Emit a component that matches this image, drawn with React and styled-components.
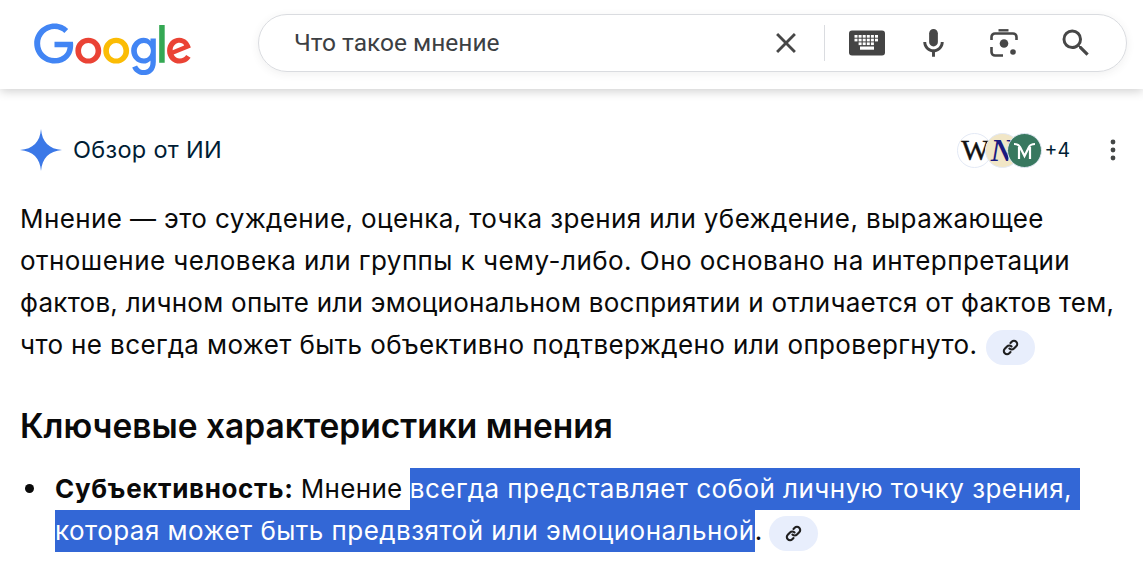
import React from 'react';
import styled, { createGlobalStyle } from 'styled-components';

const GlobalStyle = createGlobalStyle`
  html, body {
    margin: 0;
    padding: 0;
    background: #fff;
    overflow: hidden;
  }
  body {
    font-family: "Inter", "Liberation Sans", sans-serif;
    color: #0a0a0a;
  }
`;

const Page = styled.div`
  width: 1143px;
  height: 570px;
  overflow: hidden;
`;

const Header = styled.header`
  display: flex;
  align-items: flex-start;
  height: 89px;
  box-sizing: border-box;
  padding: 14px 16px 0 34px;
  box-shadow: 0 2px 10px rgba(0, 0, 0, 0.2);
`;

const LogoBox = styled.svg`
  width: 158px;
  height: 54px;
  margin-top: 9px;
  margin-right: 66px;
  flex: none;
`;

const SearchBar = styled.div`
  flex: 1;
  height: 58px;
  display: flex;
  align-items: center;
  box-sizing: border-box;
  padding-left: 35px;
  border: 1px solid #dadce0;
  border-radius: 29px;
  box-shadow: 0 2px 8px rgba(60, 64, 67, 0.08);
`;

const Query = styled.div`
  flex: 1;
  font-family: "Roboto", "Liberation Sans", sans-serif;
  font-size: 24.5px;
  color: #3c4043;
  margin-top: -1px;
`;

const IconSlot = styled.div`
  width: ${({ $w }) => $w}px;
  height: 36px;
  display: flex;
  align-items: center;
  justify-content: center;
  flex: none;
  color: #474747;
`;

const Divider = styled.div`
  width: 1px;
  height: 36px;
  background: #dadce0;
  flex: none;
`;

const Main = styled.main`
  padding: 0 20px;
`;

const OverviewRow = styled.div`
  display: flex;
  align-items: center;
  height: 42px;
  margin-top: 40px;
`;

const Spark = styled.svg`
  width: 42px;
  height: 42px;
  flex: none;
  margin-right: 11px;
`;

const OverviewTitle = styled.div`
  flex: 1;
  font-size: 23.5px;
  letter-spacing: 0.3px;
  color: #001d35;
  margin-top: -2px;
`;

const Sources = styled.div`
  display: flex;
  align-items: center;
`;

const Favicon = styled.svg`
  width: 35px;
  height: 35px;
  margin-left: ${({ $overlap }) => -$overlap}px;
  flex: none;
`;

const MoreCount = styled.span`
  font-size: 19.5px;
  color: #001d35;
  margin-left: 3px;
  margin-right: 31px;
`;

const MoreButton = styled.svg`
  width: 24px;
  height: 24px;
  color: #444746;
  margin-right: -2px;
`;

const Paragraph = styled.p`
  margin: 27px 0 0;
  font-size: 26px;
  line-height: 42px;
  white-space: nowrap;
`;

const Line = styled.span`
  display: block;
  letter-spacing: ${({ $ls }) => $ls}px;
`;

const Heading = styled.h2`
  margin: 38px 0 0;
  font-size: 33.5px;
  line-height: 44px;
  font-weight: 600;
`;

const ListRow = styled.div`
  display: grid;
  grid-template-columns: 35px 1fr;
  margin-top: 20px;
  font-size: 26px;
  line-height: 42px;
  white-space: nowrap;
`;

const Bullet = styled.span`
  width: 9px;
  height: 9px;
  margin: 16px 0 0 5px;
  border-radius: 50%;
  background: #0a0a0a;
`;

const Strong = styled.strong`
  font-weight: 700;
  letter-spacing: 0.65px;
`;

const Plain = styled.span`
  letter-spacing: 0.3px;
`;

const Selected = styled.span`
  background: #3367d6;
  color: #fff;
  padding: 5px 0 6px;
  letter-spacing: 0.46px;
`;

const LinkChip = styled.span`
  display: inline-flex;
  align-items: center;
  justify-content: center;
  width: 49px;
  height: 35px;
  margin-left: ${({ $gap }) => $gap}px;
  border-radius: 18px;
  background: #e8eefc;
  vertical-align: -2px;
`;

const LinkGlyph = styled.svg`
  width: 17px;
  height: 17px;
  color: #1f1f1f;
`;

const GoogleLogo = () => (
  <LogoBox viewBox="0 0 272 92">
    <path fill="#EA4335" d="M115.75 47.18c0 12.77-9.99 22.18-22.25 22.18s-22.25-9.41-22.25-22.18C71.25 34.32 81.24 25 93.5 25s22.25 9.32 22.25 22.18zm-9.74 0c0-7.98-5.79-13.44-12.51-13.44S80.99 39.2 80.99 47.18c0 7.9 5.79 13.44 12.51 13.44s12.51-5.55 12.51-13.44z" />
    <path fill="#FBBC05" d="M163.75 47.18c0 12.77-9.99 22.18-22.25 22.18s-22.25-9.41-22.25-22.18c0-12.85 9.99-22.18 22.25-22.18s22.25 9.32 22.25 22.18zm-9.74 0c0-7.98-5.79-13.44-12.51-13.44s-12.51 5.46-12.51 13.44c0 7.9 5.79 13.44 12.51 13.44s12.51-5.55 12.51-13.44z" />
    <path fill="#4285F4" d="M209.75 26.34v39.82c0 16.38-9.66 23.07-21.08 23.07-10.75 0-17.22-7.19-19.66-13.07l8.48-3.53c1.51 3.61 5.21 7.87 11.17 7.87 7.31 0 11.84-4.51 11.84-13v-3.19h-.34c-2.18 2.69-6.38 5.04-11.68 5.04-11.09 0-21.25-9.66-21.25-22.09 0-12.52 10.16-22.26 21.25-22.26 5.29 0 9.49 2.35 11.68 4.96h.34v-3.61h9.25zm-8.56 20.92c0-7.81-5.21-13.52-11.84-13.52-6.72 0-12.35 5.71-12.35 13.52 0 7.73 5.63 13.36 12.35 13.36 6.63 0 11.84-5.63 11.84-13.36z" />
    <path fill="#34A853" d="M225 3v65h-9.5V3h9.5z" />
    <path fill="#EA4335" d="M262.02 54.48l7.56 5.04c-2.44 3.61-8.32 9.83-18.48 9.83-12.6 0-22.01-9.74-22.01-22.18 0-13.19 9.49-22.18 20.92-22.18 11.51 0 17.14 9.16 18.98 14.11l1.01 2.52-29.65 12.28c2.27 4.45 5.8 6.72 10.75 6.72 4.96 0 8.4-2.44 10.92-6.14zm-23.27-7.98l19.82-8.23c-1.09-2.77-4.37-4.7-8.23-4.7-4.95 0-11.84 4.37-11.59 12.93z" />
    <path fill="#4285F4" d="M35.29 41.41V32H67c.31 1.64.47 3.58.47 5.68 0 7.06-1.93 15.79-8.15 22.01-6.05 6.3-13.78 9.66-24.02 9.66C16.32 69.35.36 53.89.36 34.91.36 15.93 16.32.47 35.3.47c10.5 0 17.98 4.12 23.6 9.49l-6.64 6.64c-4.03-3.78-9.49-6.72-16.97-6.72-13.86 0-24.7 11.17-24.7 25.03 0 13.86 10.84 25.03 24.7 25.03 8.99 0 14.11-3.61 17.39-6.89 2.66-2.66 4.41-6.46 5.1-11.65l-22.49.01z" />
  </LogoBox>
);

const CloseIcon = () => (
  <svg width="34" height="34" viewBox="0 0 24 24" fill="currentColor">
    <path d="M19 6.41 17.59 5 12 10.59 6.41 5 5 6.41 10.59 12 5 17.59 6.41 19 12 13.41 17.59 19 19 17.59 13.41 12z" />
  </svg>
);

const KeyboardIcon = () => (
  <svg width="36" height="26" viewBox="0 0 36 26">
    <rect x="0" y="0.5" width="36" height="25" rx="3" fill="#444" />
    {[0, 1, 2].map((row) =>
      [0, 1, 2, 3, 4, 5].slice(row === 2 ? 1 : 0, row === 2 ? 5 : 6).map((col) => (
        <rect key={`${row}-${col}`} x={5.5 + col * 4.1} y={5 + row * 3.7} width="3" height="2.7" fill="#fff" />
      ))
    )}
    <rect x="11" y="16.5" width="14" height="3.2" fill="#fff" />
  </svg>
);

const MicIcon = () => (
  <svg width="35" height="35" viewBox="0 0 24 24" fill="currentColor">
    <path d="M12 14c1.66 0 3-1.34 3-3V5c0-1.66-1.34-3-3-3S9 3.34 9 5v6c0 1.66 1.34 3 3 3z" />
    <path d="M17 11c0 2.76-2.24 5-5 5s-5-2.24-5-5H5c0 3.53 2.61 6.43 6 6.92V21h2v-3.08c3.39-.49 6-3.39 6-6.92h-2z" />
  </svg>
);

const LensIcon = () => (
  <svg width="28" height="28" viewBox="0 0 28 28" fill="none" stroke="currentColor" strokeWidth="2.6">
    <path d="M8.5 1.3h10" strokeWidth="2.4" />
    <path d="M1.5 11V8a3.5 3.5 0 0 1 3.5-3.5h18A3.5 3.5 0 0 1 26.5 8v3" />
    <path d="M1.5 18v5A3.5 3.5 0 0 0 5 26.5h8" />
    <circle cx="14" cy="14.5" r="4.3" fill="currentColor" stroke="none" />
    <circle cx="23" cy="23" r="2.8" fill="currentColor" stroke="none" />
  </svg>
);

const SearchIcon = () => (
  <svg width="36" height="36" viewBox="0 0 24 24" fill="currentColor">
    <path d="M15.5 14h-.79l-.28-.27A6.471 6.471 0 0 0 16 9.5 6.5 6.5 0 1 0 9.5 16c1.61 0 3.09-.59 4.23-1.57l.27.28v.79l5 4.99L20.49 19l-4.99-5zm-6 0C7.01 14 5 11.99 5 9.5S7.01 5 9.5 5 14 7.01 14 9.5 11.99 14 9.5 14z" />
  </svg>
);

const LinkIcon = () => (
  <LinkGlyph viewBox="0 0 24 24" fill="none" stroke="currentColor" strokeWidth="3" strokeLinecap="round">
    <path d="M10.5 13.5a4.5 4.5 0 0 0 6.4 0l3.2-3.2a4.5 4.5 0 0 0-6.4-6.4L12 5.6" />
    <path d="M13.5 10.5a4.5 4.5 0 0 0-6.4 0l-3.2 3.2a4.5 4.5 0 0 0 6.4 6.4l1.7-1.7" />
  </LinkGlyph>
);

export default function App() {
  return (
    <Page>
      <GlobalStyle />
      <Header>
        <GoogleLogo />
        <SearchBar>
          <Query>Что такое мнение</Query>
          <IconSlot $w={36}><CloseIcon /></IconSlot>
          <IconSlot $w={20} />
          <Divider />
          <IconSlot $w={24} />
          <IconSlot $w={36}><KeyboardIcon /></IconSlot>
          <IconSlot $w={30} />
          <IconSlot $w={36}><MicIcon /></IconSlot>
          <IconSlot $w={39} />
          <IconSlot $w={28}><LensIcon /></IconSlot>
          <IconSlot $w={40} />
          <IconSlot $w={36}><SearchIcon /></IconSlot>
          <IconSlot $w={32} />
        </SearchBar>
      </Header>
      <Main>
        <OverviewRow>
          <Spark viewBox="0 0 42 42">
            <path fill="#3b78e7" d="M21 0C22 13 29 20 42 21 29 22 22 29 21 42 20 29 13 22 0 21 13 20 20 13 21 0z" />
          </Spark>
          <OverviewTitle>Обзор от ИИ</OverviewTitle>
          <Sources>
            <Favicon $overlap={0} viewBox="0 0 35 35">
              <circle cx="17.5" cy="17.5" r="17" fill="#fff" stroke="#e3e9f5" />
              <text x="18.5" y="27" textAnchor="middle" fontFamily="Liberation Serif" fontSize="30" stroke="#111" strokeWidth="0.4" fill="#111">W</text>
            </Favicon>
            <Favicon $overlap={7} viewBox="0 0 35 35">
              <circle cx="17.5" cy="17.5" r="17" fill="#f1e6c6" stroke="#e3e9f5" />
              <text x="17" y="28" textAnchor="middle" fontFamily="Liberation Serif" fontStyle="italic" fontWeight="700" fontSize="31" fill="#1a1a80">N</text>
            </Favicon>
            <Favicon $overlap={13} viewBox="0 0 35 35">
              <circle cx="17.5" cy="17.5" r="17" fill="#38785f" stroke="#e3e9f5" />
              <path d="M7 11c3 0 5 1 6 3l4.500 9 4.500-9c1-2 3-3 6-3M12 14v12M23 14v12" fill="none" stroke="#fff" strokeWidth="2.2" />
            </Favicon>
            <MoreCount>+4</MoreCount>
          </Sources>
          <MoreButton viewBox="0 0 24 24" fill="currentColor">
            <circle cx="12" cy="4" r="2.4" />
            <circle cx="12" cy="12" r="2.4" />
            <circle cx="12" cy="20" r="2.4" />
          </MoreButton>
        </OverviewRow>
        <Paragraph>
          <Line $ls={0.39}>Мнение — это суждение, оценка, точка зрения или убеждение, выражающее</Line>
          <Line $ls={0.45}>отношение человека или группы к чему-либо. Оно основано на интерпретации</Line>
          <Line $ls={0.25}>фактов, личном опыте или эмоциональном восприятии и отличается от фактов тем,</Line>
          <Line $ls={0.38}>
            что не всегда может быть объективно подтверждено или опровергнуто.
            <LinkChip $gap={9}><LinkIcon /></LinkChip>
          </Line>
        </Paragraph>
        <Heading>Ключевые характеристики мнения</Heading>
        <ListRow>
          <Bullet />
          <div>
            <Strong>Субъективность:</Strong> <Plain>Мнение</Plain>{' '}
            <Selected>
              всегда представляет собой личную точку зрения,{'\u00A0'}<br />
              которая может быть предвзятой или эмоциональной
            </Selected>
            .
            <LinkChip $gap={7}><LinkIcon /></LinkChip>
          </div>
        </ListRow>
      </Main>
    </Page>
  );
}
